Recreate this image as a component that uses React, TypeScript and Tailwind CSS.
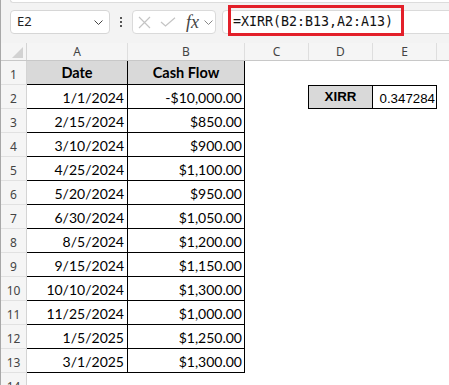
const ROWS: [string, string][] = [
  ['1/1/2024', '-$10,000.00'],
  ['2/15/2024', '$850.00'],
  ['3/10/2024', '$900.00'],
  ['4/25/2024', '$1,100.00'],
  ['5/20/2024', '$950.00'],
  ['6/30/2024', '$1,050.00'],
  ['8/5/2024', '$1,200.00'],
  ['9/15/2024', '$1,150.00'],
  ['10/10/2024', '$1,300.00'],
  ['11/25/2024', '$1,000.00'],
  ['1/5/2025', '$1,250.00'],
  ['3/1/2025', '$1,300.00'],
]

const COLUMNS = [
  { label: 'A', width: 'w-[101px]' },
  { label: 'B', width: 'w-[117px]' },
  { label: 'C', width: 'w-[64px]' },
  { label: 'D', width: 'w-[64px]' },
  { label: 'E', width: 'w-[64px]' },
]

const uiFont = "font-['Noto_Sans',sans-serif]"
const cellFont = "font-['Lato',sans-serif]"
const arialFont = "font-['Liberation_Sans',Arial,sans-serif]"

function Chevron({ className }: { className?: string }) {
  return (
    <svg width="9" height="5" viewBox="0 0 9 5" className={className}>
      <path d="M0.5 0.5 L4.5 4.5 L8.5 0.5" fill="none" stroke="currentColor" strokeWidth="1" />
    </svg>
  )
}

function RowHeader({ n }: { n: number }) {
  return (
    <div
      className={`flex h-full w-[26px] shrink-0 items-end justify-center border-r border-b border-r-[#d4d4d4] border-b-[#e1e1e1] bg-[#f5f5f5] pb-[3px] text-[12px] leading-none text-[#444] ${uiFont}`}
    >
      {n}
    </div>
  )
}

function FormulaBar() {
  return (
    <div className="h-[43px] bg-[#f3f3f3]">
      <div className="ml-[9px] h-[3px] rounded-bl-[4px] border-b border-l border-[#dcdcdc] bg-white" />
      <div className="mt-[7px] flex h-[24px] items-stretch">
        <div
          className={`ml-[9px] flex w-[100px] shrink-0 items-center justify-between rounded-[4px] border border-[#d6d6d6] bg-white pr-[6px] pl-[6px] text-[13px] text-[#222] ${uiFont}`}
        >
          <span>E2</span>
          <Chevron className="text-[#444]" />
        </div>
        <div className="flex w-[22px] shrink-0 flex-col items-center justify-center gap-[2px]">
          <span className="h-[2px] w-[2px] bg-[#555]" />
          <span className="h-[2px] w-[2px] bg-[#555]" />
          <span className="h-[2px] w-[2px] bg-[#555]" />
        </div>
        <div className="flex w-[84px] shrink-0 items-center rounded-[4px] border border-[#dadada] bg-white pl-[4px]">
          <svg width="13" height="13" viewBox="0 0 13 13" className="ml-[1px]">
            <path d="M1 1 L12 12 M12 1 L1 12" stroke="#c4c4c4" strokeWidth="1.2" />
          </svg>
          <svg width="16" height="10" viewBox="0 0 16 10" className="ml-[9px]">
            <path d="M1 5 L5.5 9 L15 0.8" fill="none" stroke="#c4c4c4" strokeWidth="1.2" />
          </svg>
          <span className="ml-[10px] font-['Liberation_Serif',serif] text-[18px] leading-none text-[#444] italic">
            fx
          </span>
          <Chevron className="ml-[5px] text-[#888]" />
        </div>
        <div className="ml-[6px] flex w-[260px] shrink-0 items-center rounded-[4px] border border-[#dadada] bg-white pl-[10px]">
          <span className="font-['DejaVu_Sans_Mono',monospace] text-[13.3px] leading-none text-[#111]">
            =XIRR(B2:B13,A2:A13)
          </span>
        </div>
      </div>
    </div>
  )
}

function ColumnHeaders() {
  return (
    <div className={`flex h-[18px] border-b border-[#c8c8c8] bg-[#f5f5f5] text-[12px] text-[#444] ${uiFont}`}>
      <div className="relative w-[26px] shrink-0 border-r border-[#d4d4d4]">
        <svg width="11" height="11" viewBox="0 0 11 11" className="absolute right-[3px] bottom-[2px]">
          <path d="M11 0 L11 11 L0 11 Z" fill="#d2d2d2" />
        </svg>
      </div>
      {COLUMNS.map((col) => (
        <div
          key={col.label}
          className={`${col.width} flex shrink-0 items-center justify-center border-r border-[#dedede] leading-none`}
        >
          {col.label}
        </div>
      ))}
      <div className="flex-1" />
    </div>
  )
}

export default function App() {
  return (
    <div className="relative h-[385px] w-[449px] overflow-hidden border-l border-[#a8a8a8] bg-white">
      <FormulaBar />
      <ColumnHeaders />

      <div className="flex h-[24px]">
        <RowHeader n={1} />
        <div
          className={`flex w-[101px] shrink-0 items-end justify-center border-r border-b border-black bg-[#d9d9d9] pb-[4px] text-[14.5px] leading-none font-bold text-black ${cellFont}`}
        >
          Date
        </div>
        <div
          className={`flex w-[117px] shrink-0 items-end justify-center border-r border-b border-black bg-[#d9d9d9] pb-[4px] text-[14.5px] leading-none font-bold text-black ${cellFont}`}
        >
          Cash Flow
        </div>
      </div>

      {ROWS.map(([date, amount], i) => (
        <div key={date} className="flex h-[24px]">
          <RowHeader n={i + 2} />
          <div
            className={`flex w-[101px] shrink-0 items-end justify-end border-r border-b border-black pr-[3px] pb-[3px] text-[14px] leading-none text-black ${cellFont}`}
          >
            {date}
          </div>
          <div
            className={`flex w-[117px] shrink-0 items-end justify-end border-r border-b border-black pr-[2px] pb-[3px] text-[14px] leading-none text-black ${cellFont}`}
          >
            {amount}
          </div>
          {i === 0 && (
            <>
              <div className="w-[64px] shrink-0 border-r border-black" />
              <div
                className={`flex w-[64px] shrink-0 items-center justify-center border-y border-r border-black bg-[#d9d9d9] text-[13.3px] leading-none font-bold text-black ${arialFont}`}
              >
                XIRR
              </div>
              <div
                className={`flex w-[64px] shrink-0 items-end justify-end border-y border-r border-black pr-[1px] pb-[3px] text-[13.3px] leading-none text-black ${arialFont}`}
              >
                0.347284
              </div>
            </>
          )}
        </div>
      ))}

      <div className="flex h-[24px]">
        <RowHeader n={14} />
      </div>

      <div className="pointer-events-none absolute top-[5px] left-[227px] h-[31px] w-[176px] border-[3px] border-[#e3202a]" />
    </div>
  )
}
